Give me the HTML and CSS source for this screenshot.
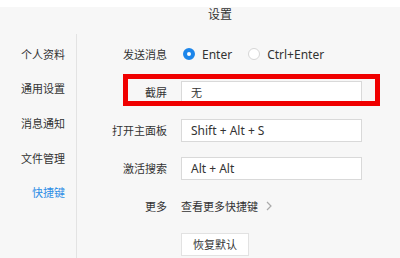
FILE: index.html
```html
<!DOCTYPE html>
<html lang="zh">
<head>
<meta charset="utf-8">
<title>设置</title>
<link rel="stylesheet" href="styles.css">
</head>
<body>
<div class="top"></div>
<div class="title">设置</div>
<div class="main">
  <nav class="side">
    <div class="nav-item">个人资料</div>
    <div class="nav-item">通用设置</div>
    <div class="nav-item">消息通知</div>
    <div class="nav-item">文件管理</div>
    <div class="nav-item active">快捷键</div>
  </nav>
  <div class="content">
    <div class="row">
      <div class="label">发送消息</div>
      <div class="ctrl radios">
        <span class="radio checked"></span><span class="rtext">Enter</span>
        <span class="radio off"></span><span class="rtext">Ctrl+Enter</span>
      </div>
    </div>
    <div class="row marked">
      <div class="label">截屏</div>
      <div class="ctrl"><div class="input">无</div></div>
      <div class="mark"></div>
    </div>
    <div class="row">
      <div class="label">打开主面板</div>
      <div class="ctrl"><div class="input latin">Shift + Alt + S</div></div>
    </div>
    <div class="row">
      <div class="label">激活搜索</div>
      <div class="ctrl"><div class="input latin">Alt + Alt</div></div>
    </div>
    <div class="row">
      <div class="label">更多</div>
      <div class="ctrl more">查看更多快捷键<svg class="chev" width="6" height="10" viewBox="0 0 6 10"><path d="M1 1 L5 5 L1 9" fill="none" stroke="#aaa" stroke-width="1.2"/></svg></div>
    </div>
    <div class="row">
      <div class="label"></div>
      <div class="ctrl"><div class="btn">恢复默认</div></div>
    </div>
  </div>
</div>
</body>
</html>
```
FILE: styles.css
```css
html, body {
  margin: 0;
  padding: 0;
}
body {
  width: 400px;
  height: 258px;
  overflow: hidden;
  background: #f7f7f7;
  font-family: "Noto Sans", "Noto Sans CJK SC", sans-serif;
  font-size: 11px;
  color: #333;
}
.top {
  height: 7px;
  background: #fff;
}
.title {
  height: 15px;
  line-height: 15px;
  padding-left: 196px;
  width: 48px;
  text-align: center;
  color: #333;
  font-size: 12px;
}
.main {
  display: flex;
  margin-top: 12px;
  height: 224px;
}
.side {
  border-right: 1px solid #e3e3e3;
  box-sizing: border-box;
  width: 77px;
  padding-top: 3.5px;
}
.nav-item {
  height: 34.7px;
  line-height: 34.7px;
  text-align: right;
  padding-right: 11px;
}
.nav-item.active {
  color: #2f8ee6;
}
.content {
  flex: 1;
  padding-top: 1px;
}
.row {
  display: flex;
  align-items: center;
  height: 38px;
  position: relative;
}
.label {
  width: 90px;
  text-align: right;
  flex: none;
}
.ctrl {
  margin-left: 14px;
  display: flex;
  align-items: center;
}
.radio {
  width: 12px;
  height: 12px;
  border-radius: 50%;
  box-sizing: border-box;
  flex: none;
}
.radio.checked {
  border: 4px solid #1d86ea;
  background: #fff;
  margin-left: 2px;
}
.radio.off {
  border: 1px solid #d6d6d6;
  background: #fff;
  margin-left: 16px;
}
.rtext {
  margin-left: 7px;
  font-size: 12px;
}
.input {
  width: 181px;
  height: 23px;
  box-sizing: border-box;
  border: 1px solid #d9d9d9;
  background: #fff;
  padding-left: 9px;
  line-height: 21px;
}
.input.latin {
  font-size: 12px;
}
.mark {
  position: absolute;
  left: 46px;
  top: 1px;
  width: 257px;
  height: 32px;
  box-sizing: border-box;
  border: 5px solid #f00000;
  pointer-events: none;
}
.more .chev {
  margin-left: 8px;
}
.btn {
  width: 68px;
  height: 23px;
  box-sizing: border-box;
  border: 1px solid #e2e2e2;
  background: #fff;
  line-height: 21px;
  text-align: center;
}
```
